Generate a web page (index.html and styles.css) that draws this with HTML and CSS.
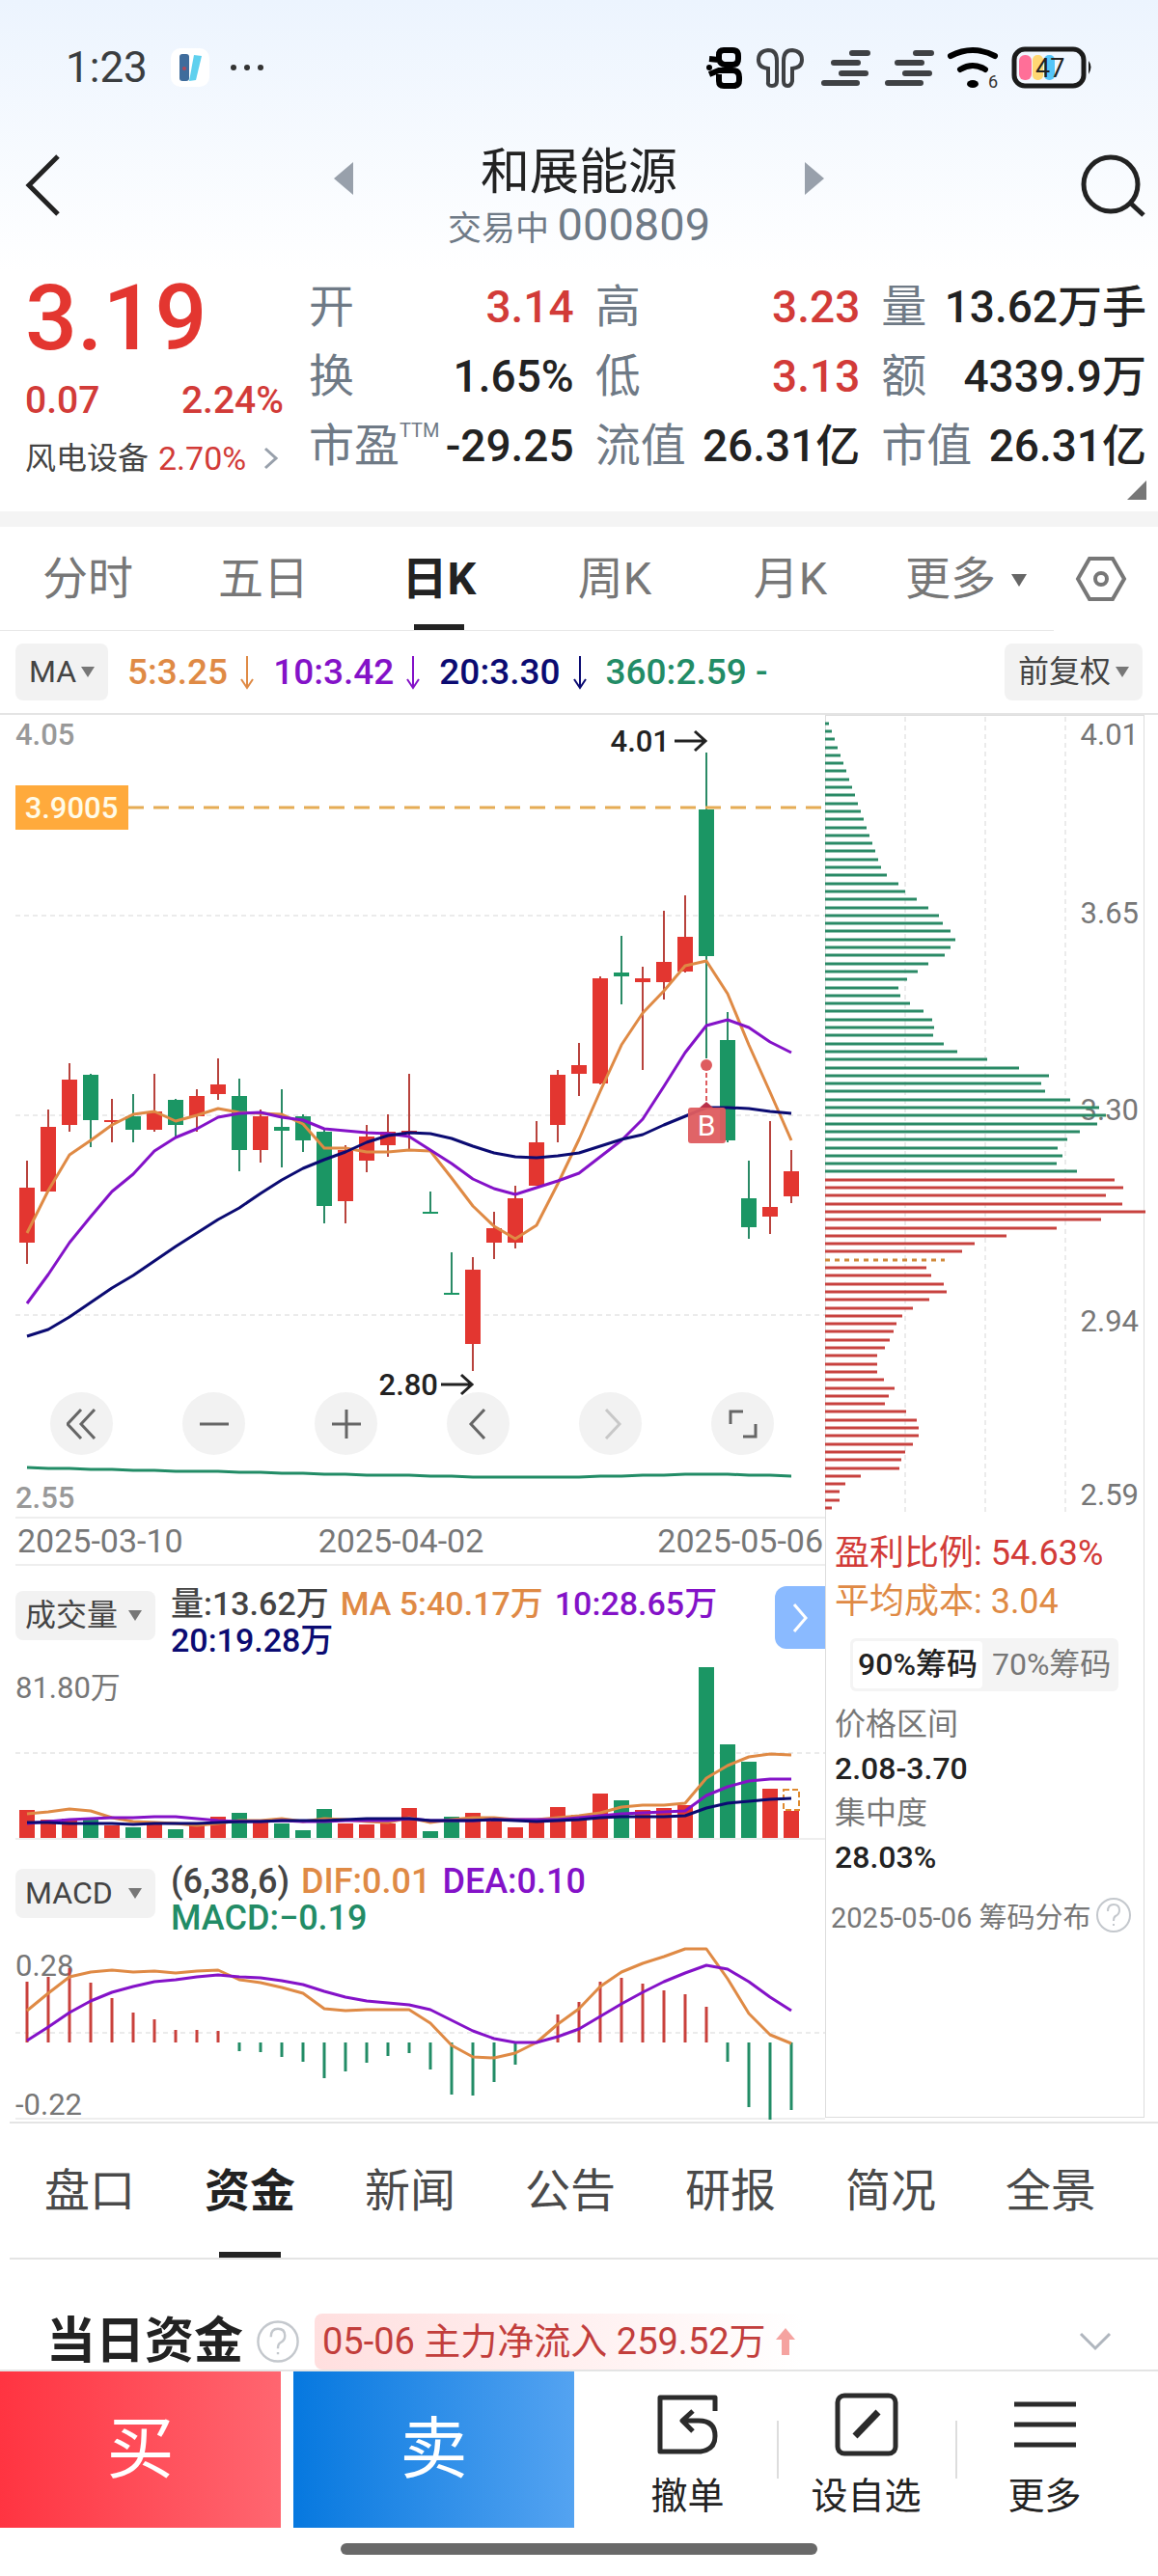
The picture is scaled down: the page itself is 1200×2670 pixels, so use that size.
FILE: index.html
```html
<!DOCTYPE html>
<html lang="zh-CN">
<head>
    <meta charset="UTF-8">
    <meta name="viewport" content="width=device-width, initial-scale=1.0">
    <title>和展能源 000809</title>
    <link rel="stylesheet" href="styles.css">
</head>
<body>
    <div class="top">
        <div class="status-bar">
            <span class="clock">1:23</span>
            <svg class="app-icon" width="40" height="40" viewBox="0 0 40 40">
                <rect width="40" height="40" rx="10" fill="#fff"/>
                <rect x="9" y="6" width="10" height="28" rx="3" fill="#3f6c9c"/>
                <path d="M24 7l8 1-6 25-7 1z" fill="#5fd0ee"/>
                <circle cx="14" cy="21" r="2" fill="#b0485a"/>
            </svg>
            <span class="dots"><i></i><i></i><i></i></span>
            <div class="status-icons">
                <svg width="402" height="50" viewBox="730 44 402 50" fill="none">
                    <g stroke="#000" stroke-width="6">
                        <path d="M745 61V56q0-5 5-5h9q6 0 6 6v3q0 6-6 6h-8q-4 0-6-5L735 60"/>
                        <path d="M735 76l10-4h14q7 0 7 7v3q0 6-6 6h-10q-5 0-5-5v-7"/>
                    </g>
                    <circle cx="735" cy="69" r="3" fill="#000"/>
                    <path stroke="#3f4144" stroke-width="4" d="M796 70q-10-1-10-9 0-9 10-10 9 0 9 11v21q0 5-5 5t-4-5zM821 70q10-1 10-9 0-9-10-10-9 0-9 11v21q0 5 4 5t5-5z"/>
                    <path stroke="#3f4144" stroke-width="6" stroke-linecap="round" d="M883 54h16M864 64h25M872 75h25M854 85h34M949 54h16M930 64h25M938 75h25M920 85h34"/>
                    <path stroke="#000" stroke-width="6" stroke-linecap="round" d="M985 57q23-12 46 0M995 71q13-8 26 0"/>
                    <ellipse cx="1008" cy="86" rx="6" ry="4" fill="#000"/>
                    <text x="1024" y="90" font-size="18" fill="#333">6</text>
                    <rect x="1051" y="50" width="72" height="38" rx="11" stroke="#1b1b1b" stroke-width="5"/>
                    <rect x="1056" y="56" width="13" height="26" rx="6" fill="#ff6f98"/>
                    <rect x="1070" y="56" width="11" height="26" rx="5" fill="#ffd773"/>
                    <rect x="1082" y="56" width="11" height="26" rx="5" fill="#55c5f8"/>
                    <text x="1073" y="79" font-size="27" fill="#222">47</text>
                    <path d="M1128 62q5 6 0 14z" fill="#1b1b1b"/>
                </svg>
            </div>
        </div>

        <header class="header">
            <button class="icon-btn back" aria-label="返回">
                <svg width="36" height="64" viewBox="0 0 36 64"><path d="M34 2L4 32l30 30"/></svg>
            </button>
            <div class="stock">
                <button class="icon-btn arrow" aria-label="上一只"><svg width="20" height="34"><path d="M20 0v34L0 17z"/></svg></button>
                <div class="stock-name">
                    <h1>和展能源</h1>
                    <p>交易中 <span>000809</span></p>
                </div>
                <button class="icon-btn arrow" aria-label="下一只"><svg width="20" height="34"><path d="M0 0v34l20-17z"/></svg></button>
            </div>
            <button class="icon-btn search" aria-label="搜索">
                <svg width="68" height="66" viewBox="0 0 68 66"><circle cx="31" cy="31" r="28"/><path d="M51 50l14 13"/></svg>
            </button>
        </header>
    </div>

    <section class="quote">
        <div class="price">
            <strong>3.19</strong>
            <div class="change"><span>0.07</span><span>2.24%</span></div>
            <a class="sector" href="#">风电设备 <em>2.70%</em>
                <svg width="16" height="24" viewBox="0 0 16 24"><path d="M2 2l11 10L2 22"/></svg>
            </a>
        </div>
        <dl class="figures">
            <div><dt>开</dt><dd class="up">3.14</dd></div>
            <div><dt>高</dt><dd class="up">3.23</dd></div>
            <div><dt>量</dt><dd>13.62万手</dd></div>
            <div><dt>换</dt><dd>1.65%</dd></div>
            <div><dt>低</dt><dd class="up">3.13</dd></div>
            <div><dt>额</dt><dd>4339.9万</dd></div>
            <div><dt>市盈<sup>TTM</sup></dt><dd>-29.25</dd></div>
            <div><dt>流值</dt><dd>26.31亿</dd></div>
            <div><dt>市值</dt><dd>26.31亿</dd></div>
        </dl>
    </section>

    <nav class="period">
        <div class="period-tabs">
            <button>分时</button>
            <button>五日</button>
            <button class="active">日K</button>
            <button>周K</button>
            <button>月K</button>
            <button class="more">更多</button>
        </div>
        <button class="icon-btn setting" aria-label="设置">
            <svg width="54" height="48" viewBox="0 0 54 48"><path d="M15 3h24l12 21-12 21H15L3 24z"/><circle cx="27" cy="24" r="6"/></svg>
        </button>
    </nav>

    <div class="ma-bar">
        <span class="pick"><select aria-label="主图指标"><option>MA</option></select></span>
        <div class="ma-list">
            <span class="c5">5:3.25 <svg width="16" height="36"><path d="M8 1v32M2 25l6 9 6-9"/></svg></span>
            <span class="c10">10:3.42 <svg width="16" height="36"><path d="M8 1v32M2 25l6 9 6-9"/></svg></span>
            <span class="c20">20:3.30 <svg width="16" height="36"><path d="M8 1v32M2 25l6 9 6-9"/></svg></span>
            <span class="c360">360:2.59 -</span>
        </div>
        <span class="pick"><select aria-label="复权"><option>前复权</option></select></span>
    </div>

    <main class="charts">
        <div class="left">
            <div class="kline">
                <svg id="kline" viewBox="0 740 855 831"></svg>
                <div class="tools">
                    <button aria-label="更早"><svg viewBox="0 0 32 32"><path d="M15 1L1 16l14 15M29 1L15 16l14 15"/></svg></button>
                    <button aria-label="缩小"><svg viewBox="0 0 32 32"><path d="M1 16h30"/></svg></button>
                    <button aria-label="放大"><svg viewBox="0 0 32 32"><path d="M1 16h30M16 1v30"/></svg></button>
                    <button aria-label="左移"><svg viewBox="0 0 32 32"><path d="M22 1L8 16l14 15"/></svg></button>
                    <button aria-label="右移" disabled><svg viewBox="0 0 32 32"><path d="M11 1l14 15-14 15"/></svg></button>
                    <button aria-label="全屏"><svg viewBox="0 0 32 32"><path d="M16 3H3v13M16 29h13V16"/></svg></button>
                </div>
            </div>
            <div class="dates"><span>2025-03-10</span><span>2025-04-02</span><span>2025-05-06</span></div>

            <div class="ind-head">
                <span class="pick"><select aria-label="副图一"><option>成交量</option></select></span>
                <div class="ind-values">
                    <span>量:13.62万</span><span class="c5">MA 5:40.17万</span><span class="c10">10:28.65万</span><span class="c20">20:19.28万</span>
                </div>
                <button class="unfold" aria-label="收起筹码"><svg width="18" height="32" viewBox="0 0 18 32"><path d="M3 2l12 14L3 30"/></svg></button>
            </div>
            <svg id="volume" viewBox="0 1720 855 186"></svg>

            <div class="ind-head macd-head">
                <span class="pick"><select aria-label="副图二"><option>MACD</option></select></span>
                <div class="ind-values">
                    <span>(6,38,6)</span><span class="c5">DIF:0.01</span><span class="c10">DEA:0.10</span><span class="c360">MACD:−0.19</span>
                </div>
            </div>
            <svg id="macd" viewBox="0 2006 855 192"></svg>
        </div>

        <aside class="chips">
            <svg id="chips" viewBox="855 740 331 831"></svg>
            <div class="chips-info">
                <p class="line up">盈利比例: 54.63%</p>
                <p class="line c5">平均成本: 3.04</p>
                <div class="switch"><button class="active">90%筹码</button><button>70%筹码</button></div>
                <dl>
                    <dt>价格区间</dt><dd>2.08-3.70</dd>
                    <dt>集中度</dt><dd>28.03%</dd>
                </dl>
                <p class="note">2025-05-06 筹码分布
                    <svg width="38" height="38" viewBox="0 0 38 38"><circle cx="19" cy="19" r="17"/><path d="M13 15q0-7 6-7t6 6q0 4-4 6-2 1-2 5M19 28v2"/></svg>
                </p>
            </div>
        </aside>
    </main>

    <nav class="info-tabs">
        <button>盘口</button>
        <button class="active">资金</button>
        <button>新闻</button>
        <button>公告</button>
        <button>研报</button>
        <button>简况</button>
        <button>全景</button>
    </nav>

    <section class="fund">
        <h2>当日资金</h2>
        <svg class="help" width="46" height="46" viewBox="0 0 38 38"><circle cx="19" cy="19" r="17"/><path d="M13 15q0-7 6-7t6 6q0 4-4 6-2 1-2 5M19 28v2"/></svg>
        <span class="flow">05-06 主力净流入 259.52万
            <svg width="20" height="28" viewBox="0 0 20 28"><path d="M10 0l10 12h-6v16H6V12H0z"/></svg>
        </span>
        <button class="icon-btn fold" aria-label="展开"><svg width="34" height="20" viewBox="0 0 34 20"><path d="M2 2l15 15L32 2"/></svg></button>
    </section>

    <footer class="trade">
        <button class="buy">买</button>
        <button class="sell">卖</button>
        <div class="actions">
            <button>
                <svg viewBox="0 0 66 66" width="66" height="66"><path d="M61 19V5H4v56h42q15-2 15-16 0-16-17-16H29M38 19l-11 10 11 11"/></svg>
                撤单
            </button>
            <button>
                <svg viewBox="0 0 66 66" width="66" height="66"><rect x="3" y="3" width="60" height="60" rx="7"/><path d="M21 45l24-25" stroke-width="7"/></svg>
                设自选
            </button>
            <button>
                <svg viewBox="0 0 66 66" width="66" height="66"><path d="M1 12h64M1 33h64M1 54h64"/></svg>
                更多
            </button>
        </div>
    </footer>
    <div class="home-bar"></div>

    <script src="chart.js"></script>
</body>
</html>
```

FILE: styles.css
```css
* {
    box-sizing: border-box;
}

body {
    margin: 0;
    background: #fff;
    color: #222;
    font-family: Roboto, "Noto Sans CJK SC", sans-serif;
}

h1, h2, p, dl, dd {
    margin: 0;
    font-weight: normal;
}

button, select {
    font-family: inherit;
    color: inherit;
    background: none;
    border: none;
    padding: 0;
    cursor: pointer;
}

svg {
    display: block;
    fill: none;
}

svg text {
    font-family: Roboto, "Noto Sans CJK SC", sans-serif;
}

.up { color: #d23b38; }
.c5 { color: #df8a45; }
.c10 { color: #8412c8; }
.c20 { color: #0b0b72; }
.c360 { color: #228c66; }

/* 顶部 */
.top {
    background: linear-gradient(#ecf4fe, #fff);
}

.status-bar {
    display: flex;
    align-items: center;
    height: 139px;
    padding: 0 68px;
}

.clock {
    font-size: 44px;
    color: #3a3d40;
}

.app-icon {
    margin-left: 24px;
}

.dots {
    display: flex;
    gap: 8px;
    margin-left: 22px;
}

.dots i {
    width: 6px;
    height: 6px;
    border-radius: 50%;
    background: #333;
}

.status-icons {
    margin-left: auto;
}

.header {
    display: flex;
    align-items: flex-start;
    justify-content: space-between;
    padding: 13px 12px 17px 26px;
}

.header svg {
    stroke: #222;
    stroke-width: 5;
}

.back {
    width: 54px;
    margin-top: 8px;
}

.search {
    width: 68px;
    margin-top: 8px;
}

.stock {
    display: flex;
    gap: 98px;
}

.header .arrow svg {
    fill: #98a0ab;
    stroke: none;
}

.arrow {
    align-self: flex-start;
    margin-top: 16px;
}

.stock-name {
    text-align: center;
}

.stock-name h1 {
    font-size: 51px;
    line-height: 54px;
}

.stock-name p {
    font-size: 35px;
    line-height: 54px;
    color: #6f7a86;
}

.stock-name p span {
    font-size: 47px;
}

/* 报价 */
.quote {
    position: relative;
    display: grid;
    grid-template-columns: 268px 1fr;
    gap: 26px;
    padding: 0 12px 25px 26px;
}

.quote::after {
    content: "";
    position: absolute;
    right: 12px;
    bottom: 12px;
    border-left: 20px solid transparent;
    border-bottom: 20px solid #777;
}

.price strong {
    display: block;
    margin-bottom: 7px;
    font-size: 95px;
    font-weight: 500;
    line-height: 96px;
    color: #e33630;
}

.change {
    display: flex;
    justify-content: space-between;
    font-size: 39px;
    font-weight: 500;
    line-height: 60px;
    color: #d23b38;
}

.sector {
    display: flex;
    align-items: center;
    gap: 10px;
    font-size: 32px;
    line-height: 60px;
    color: #444;
    text-decoration: none;
    white-space: nowrap;
}

.sector em {
    font-size: 34px;
    font-style: normal;
    color: #d23b38;
}

.sector svg {
    margin-left: 8px;
    stroke: #98a0ab;
    stroke-width: 3;
}

.figures {
    display: grid;
    grid-template-columns: repeat(3, 1fr);
    column-gap: 22px;
    align-content: start;
}

.figures div {
    display: flex;
    justify-content: space-between;
    line-height: 72px;
    white-space: nowrap;
}

.figures dt {
    display: flex;
    font-size: 47px;
    color: #6f7a86;
}

.figures sup {
    font-size: 20px;
    line-height: 40px;
}

.figures dd {
    font-size: 46px;
    font-weight: 500;
}

/* 周期 */
.period {
    display: flex;
    align-items: center;
    border-top: 16px solid #f4f4f4;
}

.period-tabs {
    flex: 1;
    display: flex;
    border-bottom: 1px solid #e8e8e8;
}

.period-tabs button {
    position: relative;
    flex: 1;
    font-size: 47px;
    line-height: 107px;
    color: #777;
}

.period-tabs .active, .info-tabs .active {
    color: #222;
    font-weight: bold;
}

.active::after {
    content: "";
    position: absolute;
    left: 50%;
    bottom: 0;
    width: 52px;
    height: 6px;
    margin-left: -26px;
    background: #222;
}

.period-tabs .more::after {
    content: "";
    display: inline-block;
    margin: 0 0 8px 16px;
    border: 8px solid transparent;
    border-top: 13px solid #666;
    border-bottom: none;
}

.setting {
    margin: 0 32px 0 22px;
}

.setting svg {
    stroke: #777;
    stroke-width: 4;
}

/* 指标 */
.ma-bar {
    display: flex;
    align-items: center;
    padding: 13px 16px;
    border-bottom: 2px solid #e4e4e4;
}

.pick {
    display: flex;
    align-items: center;
    gap: 4px;
    padding: 0 14px;
    border-radius: 8px;
    background: #f2f2f2;
}

.pick select {
    appearance: none;
    font-size: 32px;
    line-height: 59px;
    color: #444;
}

.pick::after {
    content: "";
    border: 7px solid transparent;
    border-top: 11px solid #777;
    border-bottom: none;
}

.ma-list {
    flex: 1;
    display: flex;
    gap: 19px;
    margin-left: 20px;
    font-size: 37px;
    font-weight: 500;
}

.ma-list span {
    display: flex;
    align-items: center;
    gap: 12px;
}

.ma-list svg {
    stroke: currentColor;
    stroke-width: 2;
}

.charts {
    display: flex;
}

.left {
    flex: 855 1 0;
    min-width: 0;
}

.left > svg, .kline > svg, .chips > svg {
    width: 100%;
    overflow: visible;
}

.kline {
    position: relative;
}

.tools {
    position: absolute;
    left: 52px;
    right: 53px;
    bottom: 64px;
    display: flex;
    justify-content: space-between;
}

.tools button {
    display: flex;
    align-items: center;
    justify-content: center;
    width: 65px;
    height: 65px;
    border-radius: 50%;
    background: #f2f2f2;
}

.tools svg {
    width: 32px;
    stroke: #666;
    stroke-width: 3;
}

.tools button:disabled svg {
    stroke: #c8c8c8;
}

.dates {
    display: flex;
    margin-left: 16px;
    padding: 0 2px;
    border-top: 2px solid #eee;
    border-bottom: 2px solid #eee;
    font-size: 34px;
    line-height: 47px;
    color: #777;
}

.dates span:nth-child(2) {
    margin-left: 140px;
}

.dates span:last-child {
    margin-left: auto;
}

.ind-head {
    position: relative;
    display: flex;
    align-items: flex-start;
    gap: 16px;
    padding: 20px 54px 2px 16px;
}

.macd-head {
    padding-top: 24px;
    padding-bottom: 0;
}

.ind-head .pick {
    flex: none;
    justify-content: space-between;
    width: 145px;
    margin-top: 6px;
    padding: 0 14px 0 10px;
}

.ind-head select {
    line-height: 51px;
}

.ind-values {
    display: flex;
    flex-wrap: wrap;
    column-gap: 12px;
    font-size: 34px;
    font-weight: 500;
    line-height: 38px;
}

.macd-head .ind-values {
    font-size: 36px;
}

.ind-values span:first-child {
    color: #444;
}

.unfold {
    position: absolute;
    top: 21px;
    right: 0;
    display: flex;
    align-items: center;
    justify-content: center;
    width: 52px;
    height: 65px;
    border-radius: 12px 0 0 12px;
    background: #8abaff;
}

.unfold svg {
    stroke: #fff;
    stroke-width: 3;
}

/* 筹码 */
.chips {
    flex: 331 1 0;
    min-width: 0;
    margin: 0 14px 4px 0;
    box-shadow: inset 0 0 0 1px #ddd;
}

.chips-info {
    padding: 13px 0 0 10px;
    white-space: nowrap;
}

.line {
    font-size: 36px;
    line-height: 50px;
}

.switch {
    display: flex;
    gap: 5px;
    width: fit-content;
    margin: 13px 0 11px 16px;
    padding: 3px;
    border-radius: 6px;
    background: #f4f4f4;
}

.switch button {
    padding: 0 5px;
    border-radius: 4px;
    font-size: 32px;
    line-height: 49px;
    color: #777;
}

.switch .active {
    background: #fff;
    color: #222;
    font-weight: 500;
}

.switch .active::after {
    display: none;
}

.chips-info dt, .chips-info dd {
    font-size: 32px;
    line-height: 46px;
    color: #777;
}

.chips-info dd {
    font-weight: 500;
    color: #222;
}

.note {
    display: flex;
    align-items: center;
    gap: 4px;
    margin: 16px 0 0 -4px;
    font-size: 29px;
    color: #777;
}

.note svg, .help {
    stroke: #c4c8cd;
    stroke-width: 2;
}

/* 资讯 */
.info-tabs {
    display: flex;
    margin-left: 10px;
    padding-right: 28px;
    border-top: 2px solid #e4e4e4;
    border-bottom: 2px solid #e4e4e4;
}

.info-tabs button {
    position: relative;
    flex: 1;
    font-size: 47px;
    line-height: 139px;
    color: #4a4a4a;
}

.info-tabs .active::after {
    width: 64px;
    margin-left: -32px;
}

.fund {
    display: flex;
    align-items: center;
    padding: 56px 48px 0;
    border-bottom: 2px solid #e4e4e4;
}

.fund h2 {
    font-size: 51px;
    font-weight: bold;
    line-height: 58px;
}

.help {
    margin: 0 15px 0 13px;
}

.flow {
    display: flex;
    align-items: center;
    gap: 10px;
    padding: 0 8px;
    border-radius: 8px;
    background: linear-gradient(90deg, #ffdfdf, #fff);
    font-size: 38px;
    line-height: 58px;
    color: #c23e3c;
}

.flow svg {
    fill: #f5a3a0;
}

.fold {
    margin-left: auto;
}

.fold svg {
    stroke: #b0b6be;
    stroke-width: 3;
}

/* 底部 */
.trade {
    display: flex;
}

.buy, .sell {
    flex: 291 1 0;
    font-size: 70px;
    line-height: 162px;
    color: #fff;
}

.buy {
    margin-right: 13px;
    background: linear-gradient(90deg, #ff3441, #ff6670);
}

.sell {
    background: linear-gradient(90deg, #0678df, #54a3f1);
}

.actions {
    flex: 555 1 0;
    display: flex;
    margin: 0 25px;
}

.actions button {
    position: relative;
    flex: 1;
    display: flex;
    flex-direction: column;
    align-items: center;
    gap: 14px;
    padding-top: 22px;
    font-size: 38px;
    line-height: 54px;
}

.actions button + button::before {
    content: "";
    position: absolute;
    left: 0;
    top: 51px;
    height: 60px;
    border-left: 2px solid #ddd;
}

.actions svg {
    stroke: #2b2b2b;
    stroke-width: 5;
    stroke-linejoin: round;
}

.home-bar {
    width: 494px;
    height: 12px;
    margin: 16px auto 24px;
    border-radius: 6px;
    background: #696969;
}
```

FILE: chart.js
```js
const RED = '#e33630';
const GREEN = '#1b9664';
const ORANGE = '#df8a45';
const PURPLE = '#8412c8';
const NAVY = '#0b0b72';

// 第 i 根K线的中心
const px = i => 28 + i * 22;

function line(x1, y1, x2, y2, color, width, dash) {
    return `<path d="M${x1} ${y1}L${x2} ${y2}" stroke="${color}" stroke-width="${width}"${dash ? ` stroke-dasharray="${dash}"` : ''}/>`;
}

function rect(x, y, w, h, color) {
    return `<rect x="${x}" y="${y}" width="${w}" height="${h}" fill="${color}"/>`;
}

function text(x, y, str, color, size = 31, anchor = 'start', weight = 400) {
    return `<text x="${x}" y="${y}" fill="${color}" font-size="${size}" font-weight="${weight}" text-anchor="${anchor}">${str}</text>`;
}

function curve(ys, color, width = 3) {
    const pts = ys.map((y, i) => px(i) + ',' + y).join(' ');
    return `<polyline points="${pts}" stroke="${color}" stroke-width="${width}" stroke-linejoin="round"/>`;
}

// [涨跌, 最高, 实体上, 实体下, 最低]
const candles = [
    [1, 1202, 1230, 1287, 1309], [1, 1149, 1167, 1234, 1234], [1, 1101, 1118, 1165, 1172], [0, 1112, 1113, 1160, 1188],
    [1, 1138, 1160, 1162, 1183], [0, 1133, 1156, 1170, 1183], [1, 1112, 1151, 1170, 1172], [0, 1138, 1139, 1165, 1177],
    [1, 1128, 1135, 1156, 1172], [1, 1096, 1123, 1133, 1139], [0, 1117, 1135, 1191, 1213], [1, 1149, 1156, 1191, 1204],
    [0, 1128, 1167, 1171, 1209], [0, 1154, 1156, 1181, 1193], [0, 1170, 1172, 1249, 1267], [1, 1186, 1191, 1244, 1267],
    [1, 1165, 1177, 1202, 1214], [1, 1154, 1172, 1186, 1198], [1, 1112, 1171, 1173, 1191], [0, 1234, 1255, 1257, 1257],
    [0, 1297, 1339, 1341, 1341], [1, 1302, 1315, 1392, 1420], [1, 1255, 1272, 1287, 1304], [1, 1228, 1241, 1287, 1293],
    [1, 1161, 1183, 1228, 1228], [1, 1108, 1113, 1165, 1183], [1, 1080, 1103, 1112, 1135], [1, 1011, 1013, 1122, 1123],
    [0, 969, 1007, 1011, 1040], [1, 1001, 1013, 1017, 1108], [1, 943, 996, 1017, 1035], [1, 927, 970, 1006, 1007],
    [0, 779, 838, 990, 1096], [0, 1048, 1077, 1181, 1183], [0, 1202, 1241, 1271, 1283], [1, 1161, 1250, 1260, 1278],
    [1, 1191, 1213, 1239, 1246]
];
const ma5 = [1277, 1233, 1196, 1181, 1165, 1154, 1151, 1161, 1155, 1148, 1152, 1153, 1154, 1164, 1189, 1189, 1193, 1193, 1191, 1192, 1220, 1249, 1270, 1283, 1269, 1226, 1180, 1130, 1082, 1049, 1026, 1000, 995, 1029, 1082, 1131, 1181];
const ma10 = [1350, 1320, 1287, 1260, 1234, 1216, 1192, 1178, 1169, 1157, 1153, 1152, 1157, 1160, 1169, 1171, 1173, 1174, 1177, 1191, 1205, 1221, 1231, 1237, 1230, 1223, 1215, 1198, 1181, 1159, 1125, 1090, 1062, 1056, 1064, 1079, 1090];
const ma20 = [1384, 1377, 1364, 1349, 1334, 1321, 1306, 1291, 1277, 1263, 1251, 1236, 1222, 1210, 1201, 1193, 1183, 1176, 1173, 1174, 1179, 1187, 1194, 1198, 1199, 1197, 1194, 1187, 1180, 1175, 1165, 1156, 1147, 1147, 1148, 1151, 1153];
const ma360 = [1520, 1521, 1521, 1522, 1522, 1523, 1523, 1524, 1524, 1524, 1525, 1525, 1526, 1526, 1527, 1527, 1528, 1528, 1528, 1529, 1529, 1530, 1530, 1530, 1530, 1530, 1530, 1529, 1529, 1528, 1528, 1527, 1527, 1527, 1528, 1528, 1529];

function drawKline() {
    let s = '';
    [948, 1155, 1362].forEach(y => s += line(16, y, 855, y, '#ebebeb', 2, '5 4'));
    candles.forEach(([up, high, top, bottom, low], i) => {
        s += line(px(i), high, px(i), low, up ? '#b8433d' : '#2a8a66', 2);
        s += rect(px(i) - 8, top, 16, bottom - top, up ? RED : GREEN);
    });
    s += curve(ma5, ORANGE) + curve(ma10, PURPLE) + curve(ma20, NAVY) + curve(ma360, '#228c66');

    // 持仓成本线
    s += line(133, 836, 855, 836, '#e5ac55', 3, '16 10');
    s += rect(16, 813, 117, 46, '#ffaa3c') + text(74, 847, '3.9005', '#fffbe8', 31, 'middle', 500);

    // 买点
    s += line(732, 1103, 732, 1147, '#de5c5f', 2, '5 3');
    s += '<circle cx="732" cy="1103" r="6" fill="#de5c5f"/><path d="M724 1148l8-7 8 7z" fill="#b8304a"/>';
    s += '<rect x="713" y="1147" width="39" height="37" rx="3" fill="#de5c5f" fill-opacity=".95"/>' + text(732, 1176, 'B', '#fff', 30, 'middle');

    s += text(16, 771, '4.05', '#999', 31, 'start', 500) + text(16, 1562, '2.55', '#999', 31, 'start', 500);
    s += text(694, 778, '4.01', '#222', 31, 'end', 500) + '<path d="M699 767h31M720 757l11 10-11 10" stroke="#222" stroke-width="3"/>';
    s += text(454, 1445, '2.80', '#222', 31, 'end', 500) + '<path d="M457 1434h31M478 1424l11 10-11 10" stroke="#222" stroke-width="3"/>';
    document.getElementById('kline').innerHTML = s;
}

// 成交量柱顶
const volTops = [1875, 1885, 1884, 1885, 1891, 1893, 1889, 1895, 1891, 1882, 1878, 1887, 1889, 1896, 1874, 1889, 1890, 1889, 1873, 1897, 1882, 1878, 1886, 1893, 1887, 1872, 1880, 1858, 1865, 1875, 1873, 1870, 1727, 1807, 1825, 1853, 1876];
const vol5 = [1879, 1877, 1874, 1876, 1883, 1887, 1888, 1889, 1891, 1889, 1886, 1886, 1884, 1887, 1884, 1885, 1887, 1888, 1883, 1888, 1885, 1883, 1883, 1885, 1885, 1883, 1881, 1878, 1872, 1870, 1870, 1868, 1842, 1829, 1820, 1817, 1818];
const vol10 = [1889, 1887, 1885, 1884, 1883, 1883, 1882, 1882, 1884, 1886, 1887, 1887, 1886, 1887, 1887, 1886, 1886, 1886, 1884, 1886, 1886, 1886, 1885, 1885, 1885, 1885, 1883, 1881, 1879, 1878, 1877, 1876, 1860, 1851, 1845, 1843, 1843];
const vol20 = [1888, 1888, 1889, 1889, 1889, 1890, 1889, 1889, 1889, 1888, 1887, 1887, 1886, 1886, 1886, 1885, 1884, 1884, 1884, 1886, 1886, 1886, 1885, 1886, 1887, 1886, 1885, 1883, 1882, 1882, 1882, 1881, 1873, 1868, 1866, 1864, 1863];

function drawVolume() {
    let s = line(16, 1816, 855, 1816, '#ebebeb', 2, '5 4') + line(16, 1905, 855, 1905, '#eee', 2);
    volTops.forEach((y, i) => s += rect(px(i) - 8, y, 16, 1904 - y, candles[i][0] ? RED : GREEN));
    s += '<rect x="812" y="1854" width="16" height="21" fill="#fff" stroke="#df8a2f" stroke-width="2" stroke-dasharray="6 3"/>';
    s += curve(vol5, ORANGE) + curve(vol10, PURPLE) + curve(vol20, NAVY);
    s += text(16, 1759, '81.80万', '#777');
    document.getElementById('volume').innerHTML = s;
}

// MACD柱末端, 0轴在2116
const bars = [2053, 2048, 2039, 2054, 2070, 2085, 2092, 2103, 2103, 2104, 2125, 2126, 2131, 2136, 2153, 2146, 2137, 2130, 2127, 2144, 2170, 2171, 2157, 2139, 2116, 2087, 2074, 2053, 2049, 2055, 2062, 2066, 2079, 2136, 2183, 2196, 2186];
const dif = [2083, 2065, 2048, 2043, 2041, 2043, 2042, 2044, 2042, 2041, 2051, 2054, 2059, 2065, 2081, 2083, 2082, 2082, 2082, 2096, 2119, 2131, 2132, 2127, 2116, 2097, 2081, 2058, 2043, 2034, 2027, 2019, 2019, 2050, 2086, 2108, 2117];
const dea = [2114, 2100, 2085, 2073, 2064, 2058, 2053, 2051, 2048, 2046, 2048, 2049, 2052, 2056, 2063, 2069, 2073, 2075, 2077, 2082, 2093, 2104, 2112, 2116, 2116, 2110, 2102, 2089, 2076, 2064, 2053, 2044, 2036, 2040, 2053, 2069, 2083];

function drawMacd() {
    let s = line(16, 2106, 855, 2106, '#ebebeb', 2, '5 4') + line(16, 2195, 855, 2195, '#eee', 2);
    s += text(16, 2047, '0.28', '#777') + text(16, 2191, '-0.22', '#777');
    bars.forEach((y, i) => s += line(px(i), 2116, px(i), y, y < 2116 ? '#c9413c' : '#228c66', 3));
    s += curve(dif, ORANGE) + curve(dea, PURPLE);
    document.getElementById('macd').innerHTML = s;
}

// 筹码分布, 从高价到低价
const chips = [4, 7, 10, 13, 16, 19, 22, 25, 28, 31, 34, 37, 40, 43, 46, 49, 52, 55, 58, 64, 76, 83, 95, 107, 118, 122, 130, 135, 130, 124, 107, 96, 85, 76, 78, 88, 102, 111, 113, 112, 123, 137, 168, 201, 232, 224, 228, 254, 284, 291, 282, 264, 251, 241, 246, 240, 261,
    300, 309, 291, 308, 332, 286, 240, 188, 155, 142, 124, 105, 110, 123, 126, 108, 91, 80, 74, 71, 67, 62, 54, 54, 54, 61, 72, 66, 62, 84, 95, 97, 97, 91, 83, 79, 77, 37, 21, 15, 15, 7];

function drawChips() {
    let s = '';
    [938, 1021, 1104].forEach(x => s += line(x, 742, x, 1570, '#ebebeb', 2, '5 4'));
    [[771, '4.01'], [956, '3.65'], [1160, '3.30'], [1379, '2.94'], [1559, '2.59']].forEach(([y, t]) => s += text(1180, y, t, '#777', 31, 'end'));
    chips.forEach((w, i) => {
        const y = Math.round(748.6 + i * 8.3);
        if (i === 67) {
            s += line(855, y, 855 + w, y, '#d08a3c', 3, '5 5'); // 平均成本
        } else {
            s += line(855, y, 855 + w, y, i < 57 ? '#2a8a66' : '#c8423f', 3);
        }
    });
    document.getElementById('chips').innerHTML = s;
}

drawKline();
drawVolume();
drawMacd();
drawChips();
```
